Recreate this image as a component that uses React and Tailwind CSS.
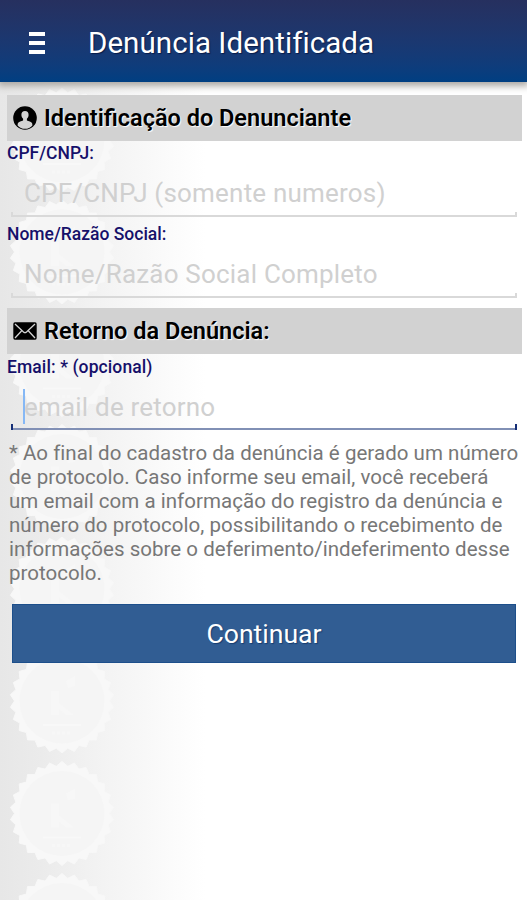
const SEAL_CENTERS = [140, 252, 364.5, 476.5, 589, 701, 813.5, 925.5];

// Scalloped outline of a seal, centred on the origin
const sealOutline = Array.from({ length: 52 }, (_, i) => {
  const r = i % 2 ? 47.5 : 52;
  const a = (i * Math.PI) / 26 - Math.PI / 2;
  return `${(r * Math.cos(a)).toFixed(2)},${(r * Math.sin(a)).toFixed(2)}`;
}).join(" ");

function Backdrop() {
  return (
    <svg className="absolute inset-0 -z-10" width="527" height="900" aria-hidden="true">
      <defs>
        <linearGradient id="fade" x1="0" x2="205" y1="0" y2="0" gradientUnits="userSpaceOnUse">
          <stop offset="0" stopColor="#e7e7e7" />
          <stop offset="0.2" stopColor="#ebebeb" />
          <stop offset="0.5" stopColor="#f3f3f3" />
          <stop offset="0.75" stopColor="#f9f9f9" />
          <stop offset="1" stopColor="#ffffff" />
        </linearGradient>
      </defs>
      <rect width="527" height="900" fill="url(#fade)" />
      {SEAL_CENTERS.map((y) => (
        <g key={y} transform={`translate(62 ${y})`}>
          <polygon points={sealOutline} fill="#f8f8f8" strokeLinejoin="round" stroke="#f8f8f8" />
          <circle r="42.5" fill="#f5f5f5" />
          <path d="M-11 -10h8v24h-8zM4 -20l9-5v10l-7 2zM-3 2l15 12h-8l-7-6z" fill="#f7f7f7" />
          <path d="M-19 24h38" stroke="#f8f8f8" strokeWidth="2" />
          <path d="M-10 32h20" stroke="#f7f7f7" strokeWidth="3" strokeDasharray="3 2" />
        </g>
      ))}
    </svg>
  );
}

function UserIcon() {
  return (
    <svg width="24" height="24" viewBox="0 0 24 24" className="shrink-0">
      <circle cx="12" cy="12" r="11.8" fill="#000" />
      <path d="M12 5c-2.300 0-3.700 1.500-3.600 3.900.1 1.700.8 3 1.700 3.800v1.900c-1.500.8-4.600 1-5.200 2.700-.2.700-.3 1.400-.3 2.100C6.600 21.600 9.100 22.800 12 22.800s5.400-1.200 7.400-3.400c0-.7-.1-1.400-.3-2.100-.6-1.700-3.700-1.900-5.200-2.700v-1.900c.9-.8 1.600-2.100 1.700-3.800C15.700 6.500 14.300 5 12 5z" fill="#d3d3d3" />
    </svg>
  );
}

function MailIcon() {
  return (
    <svg width="24" height="18" viewBox="0 0 24 18" className="shrink-0">
      <rect x="0.300" y="0.300" width="23.400" height="17.400" rx="1.600" fill="#000" />
      <path d="M2 2l8.500 8q1.500 1.300 3 0L22 2M2 16l6.500-7M22 16l-6.500-7" fill="none" stroke="#d3d3d3" strokeWidth="1.300" />
    </svg>
  );
}

function SectionTitle({ icon, children }) {
  return (
    <h2 className="flex h-[46px] items-center gap-[7px] bg-[#d2d2d2] pl-[6px] text-[23.5px] font-semibold text-black">
      {icon}
      <span className="pt-[2px] whitespace-nowrap [text-shadow:1px_1px_1px_#fff]">{children}</span>
    </h2>
  );
}

function Field({ label, hint, active, className }) {
  return (
    <div className={className}>
      <label className={`block h-[25px] whitespace-nowrap text-[17.5px] font-medium text-[#16106a] ${active ? "leading-[26px] tracking-[0.1px]" : "leading-[25px]"}`}>{label}</label>
      <div className={`relative mr-[5px] ml-[4px] flex h-[51px] items-center border-b-2 pl-[13px] text-[26px] tracking-[0.2px] text-[#d0d0d0] ${active ? "border-[#8190b5] pt-[8px]" : "border-[#d9d9d9] pt-[6px]"}`}>
        <span className="whitespace-nowrap">{hint}</span>
        {active && <i className="absolute top-[10px] left-[12px] h-[35px] w-[2px] bg-[#86b8f5]" />}
        <i className={`absolute -bottom-[2px] left-0 w-[2px] ${active ? "h-[6px] bg-[#152e77]" : "h-[5px] bg-[#d9d9d9]"}`} />
        <i className={`absolute right-0 -bottom-[2px] w-[2px] ${active ? "h-[6px] bg-[#152e77]" : "h-[5px] bg-[#d9d9d9]"}`} />
      </div>
    </div>
  );
}

const NOTICE = [
  "* Ao final do cadastro da denúncia é gerado um número",
  "de protocolo. Caso informe seu email, você receberá",
  "um email com a informação do registro da denúncia e",
  "número do protocolo, possibilitando o recebimento de",
  "informações sobre o deferimento/indeferimento desse",
  "protocolo.",
];

export default function App() {
  return (
    <div className="relative isolate flex h-[900px] w-[527px] flex-col overflow-hidden font-[Roboto,sans-serif]">
      <Backdrop />
      <header className="flex h-[82px] shrink-0 items-center bg-linear-to-b from-[#26305f] to-[#003f82] pt-[4px] pl-[29px] text-white shadow-[0_2px_7px_2px_#aaa7a3]">
        <div className="flex w-[16px] flex-col gap-[5px]">
          <i className="h-[4px] bg-white" />
          <i className="h-[4px] bg-white" />
          <i className="h-[4px] bg-white" />
        </div>
        <h1 className="ml-[43px] whitespace-nowrap text-[29.500px] tracking-[0.060px] [text-shadow:1px_1px_1px_#081c4a]">Denúncia Identificada</h1>
      </header>
      <main className="flex flex-col pt-[13px] pr-[5px] pl-[7px]">
        <SectionTitle icon={<UserIcon />}>Identificação do Denunciante</SectionTitle>
        <Field label="CPF/CNPJ:" hint="CPF/CNPJ (somente numeros)" />
        <Field className="mt-[5px]" label="Nome/Razão Social:" hint="Nome/Razão Social Completo" />
        <div className="h-[10px]" />
        <SectionTitle icon={<MailIcon />}>Retorno da Denúncia:</SectionTitle>
        <Field label="Email: * (opcional)" hint="email de retorno" active />
        <p className="mt-[11px] ml-[2px] text-[20.500px] leading-[24px] tracking-[0.040px] whitespace-nowrap text-[#777]">
          {NOTICE.map((line) => (
            <span key={line} className="block">{line}</span>
          ))}
        </p>
        <button className="mt-[19px] mr-[6px] ml-[5px] h-[59px] border border-[#1d4f8b] bg-[#315d93] text-[26.600px] text-white [text-shadow:1px_1px_1px_#173d70]">Continuar</button>
      </main>
    </div>
  );
}
